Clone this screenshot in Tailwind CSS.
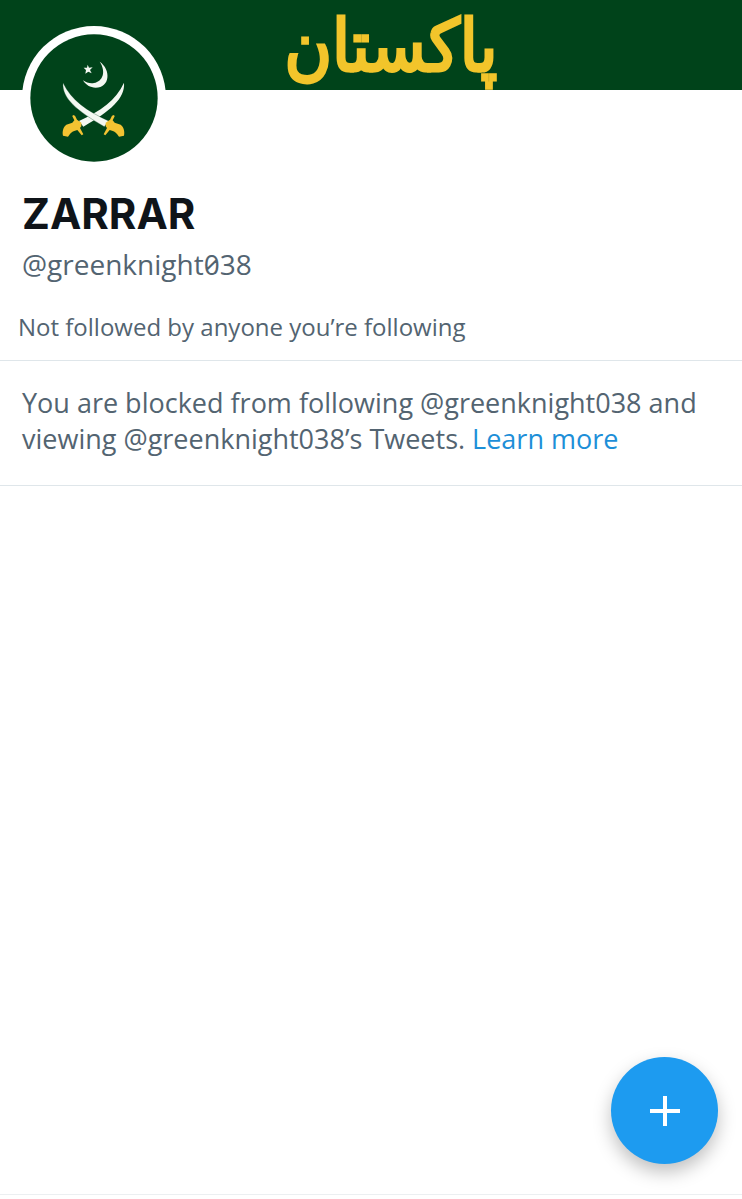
<!DOCTYPE html>
<html lang="en">
<head>
<meta charset="UTF-8" />
<meta name="viewport" content="width=device-width, initial-scale=1.0"/>
<title>ZARRAR (@greenknight038)</title>
<script src="https://cdn.jsdelivr.net/npm/@tailwindcss/browser@4"></script>
</head>
<body class="bg-white text-[#536471] font-['Open_Sans',sans-serif]">

<div class="min-h-screen flex flex-col">
  <!-- Banner -->
  <header class="h-[90px] bg-[#00431a] overflow-hidden flex items-end justify-center pl-10">
    <span lang="ur" dir="rtl" class="font-['DejaVu_Sans_Condensed','DejaVu_Sans',sans-serif] text-[72px] leading-[88px] text-[#f2c52b] [-webkit-text-stroke:3px_#f2c52b]">پاکستان</span>
  </header>

  <main class="grow flex flex-col">
    <!-- Profile -->
    <section class="border-b border-[#dfe6ea] px-[22px] pb-4">
      <div class="relative -mt-16 size-36 rounded-full bg-white p-2">
        <svg class="size-full" viewBox="-60 -63 384 384" role="img" aria-label="Profile picture">
          <circle cx="132" cy="129" r="191" fill="#00431a"/>
          <path d="M149 20C184 44 180 98 137 98C121 98 107 90 99 76C109 83 121 86 132 84C159 79 169 49 149 20Z" fill="#f4f8f2"/>
          <path d="M113 29L117 38L128 37L120 45L125 55L115 50L106 56L108 45L101 38L111 38Z" fill="#f4f8f2"/>
          <path d="M222 83C226 130 181 168 100 215L87 198C152 168 198 136 222 83Z" fill="#f4f8f2"/>
          <path d="M39 83C35 130 82 168 163 215L176 198C111 168 64 136 39 83Z" fill="#f4f8f2" stroke="#00431a" stroke-width="1"/>
          <g id="hilt" fill="#f3c332">
            <path d="M69 180L75 182L81 194L94 203L94 214L90 219L100 238L95 241L82 225C72 227 64 232 60 237L54 245L39 242C36 229 40 216 49 209L67 203L73 196L67 184Z"/>
          </g>
          <use href="#hilt" transform="translate(261 0) scale(-1 1)"/>
        </svg>
      </div>
      <h1 class="mt-4 font-['Inter',sans-serif] text-[42px] leading-[56px] font-bold text-[#0f1419]">ZARRAR</h1>
      <p class="mt-1 text-[28px] leading-9 slashed-zero">@greenknight038</p>
      <p class="mt-7 -ml-1 text-2xl leading-[34px]">Not followed by anyone you’re following</p>
    </section>

    <!-- Blocked notice -->
    <section class="border-b border-[#dfe6ea] px-[22px] pt-6 pb-7">
      <p class="text-[27px] leading-9">You are blocked from following @greenknight038 and viewing @greenknight038’s Tweets. <a href="#" class="text-[#1d8fd8]">Learn more</a></p>
    </section>
  </main>

  <footer class="h-[5px] border-t border-[#eceff1]"></footer>
</div>

<!-- Compose -->
<button type="button" aria-label="Compose" class="fixed right-6 bottom-[35px] size-[107px] rounded-full bg-[#1d9bf0] flex items-center justify-center text-white shadow-[0_8px_18px_rgba(0,0,0,0.25)]">
  <svg class="size-8" viewBox="0 0 32 32" fill="none" stroke="currentColor" stroke-width="4">
    <path d="M16 1V31M1 16H31"/>
  </svg>
</button>

</body>
</html>
